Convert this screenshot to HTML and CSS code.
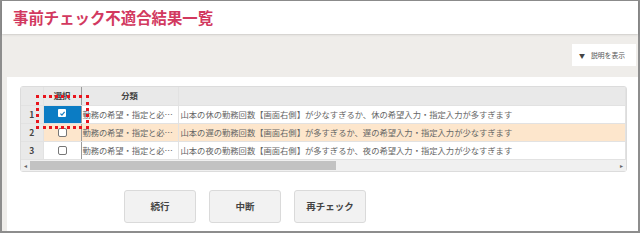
FILE: index.html
```html
<!DOCTYPE html>
<html lang="ja">
<head>
<meta charset="utf-8">
<link rel="stylesheet" href="styles.css">
</head>
<body>
<div class="frame">
  <header class="header">
    <h1 class="title">事前チェック不適合結果一覧</h1>
  </header>
  <div class="toolbar">
    <div class="help-btn"><span class="tri">▼</span><span>説明を表示</span></div>
  </div>
  <main class="content">
    <div class="grid-wrap">
      <table class="grid">
        <colgroup>
          <col class="c-num"><col class="c-sel"><col class="c-cat"><col>
        </colgroup>
        <thead>
          <tr><th class="num"></th><th class="sel">選択</th><th class="cat">分類</th><th></th></tr>
        </thead>
        <tbody>
          <tr>
            <td class="num">1</td>
            <td class="sel active"><span class="cb checked"><svg viewBox="0 0 10 10" width="7" height="7"><path d="M2 5.2 L4.2 7.2 L8 2.8" fill="none" stroke="#1a7fc4" stroke-width="1.8"/></svg></span></td>
            <td class="cat">勤務の希望・指定と必…</td>
            <td class="txt">山本の休の勤務回数【画面右側】が少なすぎるか、休の希望入力・指定入力が多すぎます</td>
          </tr>
          <tr class="hl">
            <td class="num">2</td>
            <td class="sel"><span class="cb"></span></td>
            <td class="cat">勤務の希望・指定と必…</td>
            <td class="txt">山本の遅の勤務回数【画面右側】が多すぎるか、遅の希望入力・指定入力が少なすぎます</td>
          </tr>
          <tr>
            <td class="num">3</td>
            <td class="sel"><span class="cb"></span></td>
            <td class="cat">勤務の希望・指定と必…</td>
            <td class="txt">山本の夜の勤務回数【画面右側】が多すぎるか、夜の希望入力・指定入力が少なすぎます</td>
          </tr>
        </tbody>
      </table>
      <div class="hscroll">
        <span class="arrow">◂</span>
        <div class="track"><div class="thumb"></div></div>
        <span class="arrow">▸</span>
      </div>
      <div class="focus-ring"></div>
    </div>
    <div class="actions">
      <button class="btn">続行</button>
      <button class="btn">中断</button>
      <button class="btn">再チェック</button>
    </div>
  </main>
</div>
</body>
</html>
```

FILE: styles.css
```css
* { box-sizing: border-box; }
html, body { margin: 0; padding: 0; }
body {
  width: 640px;
  height: 233px;
  overflow: hidden;
  font-family: "Noto Sans CJK JP", "Noto Sans", sans-serif;
  background: #ffffff;
}
.frame {
  width: 640px;
  height: 233px;
  border: 2px solid #8d8d8d;
  border-top-width: 1px;
  background: #efedea;
  display: flex;
  flex-direction: column;
}
.header {
  height: 33px;
  background: #ffffff;
  padding-left: 11px;
  display: flex;
  align-items: center;
  box-shadow: 0 1px 2px rgba(0,0,0,0.18);
  position: relative;
  z-index: 1;
}
.title {
  margin: 0;
  font-size: 15.4px;
  font-weight: 700;
  color: #d2395f;
  letter-spacing: 0;
  line-height: 1;
}
.toolbar {
  height: 43px;
  display: flex;
  justify-content: flex-end;
  align-items: flex-start;
  padding-top: 8px;
  padding-right: 2px;
  border-top: 2px solid #f5f3f0;
}
.help-btn {
  width: 64px;
  height: 22px;
  background: #ffffff;
  display: flex;
  align-items: center;
  padding-left: 7px;
  gap: 6px;
  font-size: 6.8px;
  color: #555;
}
.help-btn .tri { font-size: 6px; color: #444; }
.content {
  flex: 1;
  margin-left: 5px;
  background: #ffffff;
  padding: 9px 9px 0 13px;
}
.grid-wrap {
  position: relative;
  width: 607px;
  border: 1px solid #dcdcdc;
  border-radius: 3px;
}
.grid {
  width: 100%;
  border-collapse: collapse;
  table-layout: fixed;
  font-size: 8.3px;
  color: #666;
}
.c-num { width: 22px; }
.c-sel { width: 38px; }
.c-cat { width: 97px; }
.grid th, .grid td {
  height: 18px;
  padding: 0 2px;
  border-bottom: 1px solid #e2e2e2;
  border-right: 1px solid #e2e2e2;
  white-space: nowrap;
  line-height: 17px;
}
.grid th {
  background: #e9e9e9;
  color: #444;
  font-weight: 700;
  text-align: center;
  font-size: 8.3px;
}
.grid td.num {
  background: #e9e9e9;
  color: #444;
  font-weight: 700;
  text-align: center;
  font-size: 8.5px;
}
.grid .sel { text-align: center; border-right: 1px solid #9a9a9a; }
.grid td.sel.active { background: #0b7cc4; }
.grid tr.hl td:not(.num) { background: #fde6cc; }
.grid td.cat { padding-left: 1px; letter-spacing: -0.1px; }
.grid td.txt { padding-left: 2px; }
.cb {
  display: inline-block;
  width: 9px;
  height: 9px;
  border: 1px solid #777;
  border-radius: 2px;
  background: #fff;
  vertical-align: middle;
  position: relative;
  top: -1px;
}
.cb.checked {
  width: 8px;
  height: 8px;
  border: none;
  border-radius: 1px;
  display: inline-flex;
  align-items: center;
  justify-content: center;
  top: -2px;
}
.hscroll {
  height: 11px;
  display: flex;
  align-items: center;
  background: #f0f0f0;
}
.arrow {
  width: 9px;
  font-size: 6px;
  color: #666;
  text-align: center;
}
.track { flex: 1; height: 9px; }
.thumb { width: 306px; height: 9px; background: #c2c2c2; }
.focus-ring {
  position: absolute;
  left: 15px;
  top: 8px;
  width: 53px;
  height: 34px;
  border: 3px dotted #e8141c;
  pointer-events: none;
}
.actions {
  display: flex;
  gap: 13px;
  margin-top: 18px;
  margin-left: 104px;
}
.btn {
  width: 72px;
  height: 33px;
  background: #f2f2f2;
  border: 1px solid #dadada;
  border-radius: 3px;
  font-family: "Noto Sans CJK JP", sans-serif;
  font-size: 9.5px;
  font-weight: 700;
  color: #444;
  padding: 0;
}
```
